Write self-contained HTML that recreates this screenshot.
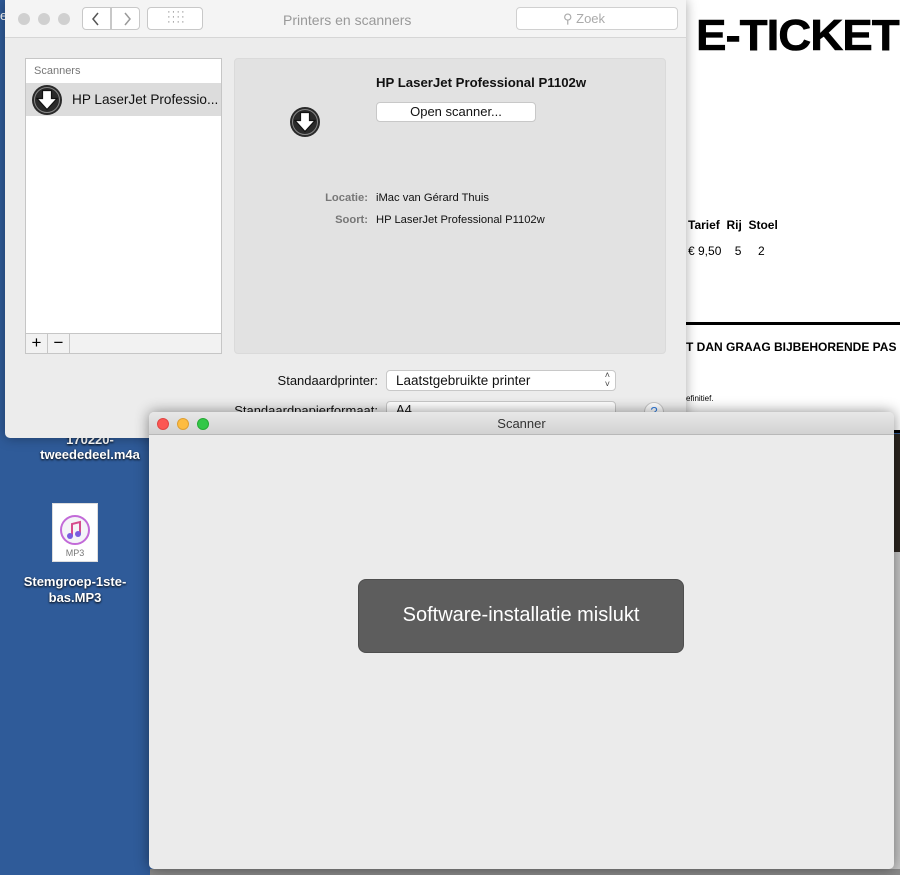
<!DOCTYPE html>
<html><head><meta charset="utf-8"><style>
*{margin:0;padding:0;box-sizing:border-box}
body{width:900px;height:875px;overflow:hidden;position:relative;background:#2f5b99;font-family:"Liberation Sans",sans-serif;}
.abs{position:absolute}
.ticket{left:600px;top:0;width:300px;height:430px;background:#fff}
.dot{position:absolute;width:12px;height:12px;border-radius:50%}
.btn{position:absolute;background:#fff;border:1px solid #c8c8c8;border-radius:4px}
</style></head><body>
<div class="abs" style="left:20px;top:432px;width:140px;text-align:center;color:#fff;font-weight:bold;font-size:13px;text-shadow:0 1px 2px #000">170220-<br>tweededeel.m4a</div>
<div class="abs" style="left:52px;top:503px;width:46px;height:59px;background:#fff;border:1px solid #ddd"></div>
<svg class="abs" style="left:59px;top:514px" width="32" height="32"><circle cx="16" cy="16" r="14" fill="#f4f4f8" stroke="#c26ad8" stroke-width="2"/><path d="M13 22V10l8-2v12" stroke="#d64b8c" stroke-width="2" fill="none"/><circle cx="11" cy="22" r="3" fill="#7a5de0"/><circle cx="19" cy="20" r="3" fill="#7a5de0"/></svg>
<div class="abs" style="left:52px;top:548px;width:46px;text-align:center;font-size:9px;color:#777">MP3</div>
<div class="abs" style="left:10px;top:574px;width:130px;text-align:center;color:#fff;font-weight:bold;font-size:13px;line-height:16px;text-shadow:0 1px 2px #000">Stemgroep-1ste-<br>bas.MP3</div>
<div class="abs" style="left:0;top:8px;color:#fff;font-size:13px">e</div>

<div class="abs ticket"></div>
<div class="abs" style="left:696px;top:11px;font-size:44px;font-weight:bold;letter-spacing:-1px;transform:scaleX(1.04);transform-origin:left;-webkit-text-stroke:0.6px #000">E-TICKET</div>
<div class="abs" style="left:688px;top:218px;font-size:12px;font-weight:bold">Tarief&nbsp;&nbsp;Rij&nbsp;&nbsp;Stoel</div>
<div class="abs" style="left:688px;top:244px;font-size:12px">€ 9,50&nbsp;&nbsp;&nbsp;&nbsp;5&nbsp;&nbsp;&nbsp;&nbsp;&nbsp;2</div>
<div class="abs" style="left:686px;top:322px;width:214px;height:3px;background:#000"></div>
<div class="abs" style="left:686px;top:340px;font-size:12px;font-weight:bold;white-space:nowrap">T DAN GRAAG BIJBEHORENDE PAS</div>
<div class="abs" style="left:686px;top:394px;font-size:8px">efinitief.</div>
<div class="abs" style="left:860px;top:430px;width:40px;height:3px;background:#000"></div>
<div class="abs" style="left:860px;top:434px;width:40px;height:118px;background:#2c2620"></div>
<div class="abs" style="left:860px;top:552px;width:40px;height:323px;background:#c8c8c8"></div>
<div class="abs" style="left:150px;top:869px;width:750px;height:6px;background:#8a8a8a"></div>

<div class="abs" style="left:5px;top:0;width:681px;height:438px;background:#ececec;border-radius:0 0 5px 5px;box-shadow:0 0 12px rgba(0,0,0,.35)">
  <div class="abs" style="left:0;top:0;width:681px;height:38px;background:#f4f4f4;border-bottom:1px solid #d6d6d6"></div>
  <div class="dot" style="left:13px;top:13px;background:#d0d0d0"></div>
  <div class="dot" style="left:33px;top:13px;background:#d0d0d0"></div>
  <div class="dot" style="left:53px;top:13px;background:#d0d0d0"></div>
  <div class="btn" style="left:77px;top:7px;width:29px;height:23px;border-radius:4px 0 0 4px"></div>
  <div class="btn" style="left:106px;top:7px;width:29px;height:23px;border-radius:0 4px 4px 0"></div>
  <svg class="abs" style="left:86px;top:12px" width="50" height="14"><path d="M7 1L2 7l5 6" stroke="#555" stroke-width="1.5" fill="none"/><path d="M34 1l5 6-5 6" stroke="#999" stroke-width="1.5" fill="none"/></svg>
  <div class="btn" style="left:142px;top:7px;width:56px;height:23px"></div>
  <div class="abs" style="left:162px;top:10px;font-size:11px;color:#888;letter-spacing:1px;line-height:5px">····<br>····<br>····</div>
  <div class="abs" style="left:278px;top:12px;font-size:14px;color:#999">Printers en scanners</div>
  <div class="btn" style="left:511px;top:7px;width:162px;height:23px;border-color:#d0d0d0"></div>
  <div class="abs" style="left:558px;top:11px;font-size:13px;color:#aaa">&#9906; Zoek</div>

  <div class="abs" style="left:20px;top:58px;width:197px;height:296px;background:#fff;border:1px solid #c6c6c6"></div>
  <div class="abs" style="left:29px;top:65px;font-size:11px;color:#777">Scanners</div>
  <div class="abs" style="left:21px;top:83px;width:195px;height:33px;background:#dcdcdc"></div>
  <svg class="abs" style="left:26px;top:84px" width="32" height="32"><circle cx="16" cy="16" r="15" fill="#2a2a2a"/><circle cx="16" cy="16" r="12.5" fill="none" stroke="#888" stroke-width="1"/><path d="M11.5 6.5h9v8h5.5L16 25.5 6 14.5h5.5z" fill="#fff" stroke="#111" stroke-width="1.2"/></svg>
  <div class="abs" style="left:67px;top:92px;font-size:13.6px;color:#111">HP LaserJet Professio...</div>
  <div class="abs" style="left:20px;top:333px;width:197px;height:21px;background:#f2f2f2;border:1px solid #c6c6c6"></div>
  <div class="abs" style="left:20px;top:333px;width:23px;height:21px;border:1px solid #c6c6c6;text-align:center;font-size:17px;line-height:18px">+</div>
  <div class="abs" style="left:42px;top:333px;width:23px;height:21px;border:1px solid #c6c6c6;text-align:center;font-size:17px;line-height:17px">−</div>

  <div class="abs" style="left:229px;top:58px;width:432px;height:296px;background:#e2e2e2;border-radius:4px;border:1px solid #dadada"></div>
  <div class="abs" style="left:371px;top:75px;font-size:13.2px;font-weight:bold;color:#111">HP LaserJet Professional P1102w</div>
  <div class="btn" style="left:371px;top:102px;width:160px;height:20px;text-align:center;font-size:13px;line-height:18px;color:#111">Open scanner...</div>
  <svg class="abs" style="left:284px;top:106px" width="32" height="32"><circle cx="16" cy="16" r="15" fill="#2a2a2a"/><circle cx="16" cy="16" r="12.5" fill="none" stroke="#888" stroke-width="1"/><path d="M11.5 6.5h9v8h5.5L16 25.5 6 14.5h5.5z" fill="#fff" stroke="#111" stroke-width="1.2"/></svg>
  <div class="abs" style="left:240px;top:192px;width:123px;text-align:right;font-size:11.2px;font-weight:bold;color:#777">Locatie:</div>
  <div class="abs" style="left:371px;top:192px;font-size:11.2px;color:#111">iMac van Gérard Thuis</div>
  <div class="abs" style="left:240px;top:214px;width:123px;text-align:right;font-size:11.2px;font-weight:bold;color:#777">Soort:</div>
  <div class="abs" style="left:371px;top:214px;font-size:11.2px;color:#111">HP LaserJet Professional P1102w</div>

  <div class="abs" style="left:200px;top:373px;width:173px;text-align:right;font-size:13px;color:#111">Standaardprinter:</div>
  <div class="btn" style="left:381px;top:370px;width:230px;height:21px;font-size:13.5px;line-height:19px;padding-left:9px;color:#111">Laatstgebruikte printer<span style="position:absolute;right:5px;top:0;font-size:9px;line-height:9px;color:#444">˄<br>˅</span></div>
  <div class="abs" style="left:200px;top:403px;width:173px;text-align:right;font-size:13px;color:#111">Standaardpapierformaat:</div>
  <div class="btn" style="left:381px;top:401px;width:230px;height:21px;font-size:13px;padding-left:9px;color:#111">A4</div>
  <div class="abs" style="left:639px;top:402px;width:20px;height:20px;border-radius:50%;background:#fff;border:1px solid #c8c8c8;color:#2f7de1;font-size:13px;text-align:center;line-height:18px">?</div>
</div>

<div class="abs" style="left:149px;top:412px;width:745px;height:457px;background:#ebebeb;border-radius:5px;box-shadow:0 0 14px rgba(0,0,0,.45);overflow:hidden">
  <div class="abs" style="left:0;top:0;width:745px;height:23px;background:linear-gradient(#e8e8e8,#d2d2d2);border-bottom:1px solid #b8b8b8"></div>
  <div class="dot" style="left:8px;top:6px;background:#fc5753;border:1px solid #df4744"></div>
  <div class="dot" style="left:28px;top:6px;background:#fdbc40;border:1px solid #de9f34"></div>
  <div class="dot" style="left:48px;top:6px;background:#33c748;border:1px solid #27aa35"></div>
  <div class="abs" style="left:0;top:4px;width:745px;text-align:center;font-size:13px;color:#333">Scanner</div>
  <div class="abs" style="left:209px;top:167px;width:326px;height:74px;background:#5d5d5d;border-radius:8px;border:1px solid #4e4e4e;color:#fff;font-size:20px;text-align:center;line-height:70px">Software-installatie mislukt</div>
</div>
</body></html>
